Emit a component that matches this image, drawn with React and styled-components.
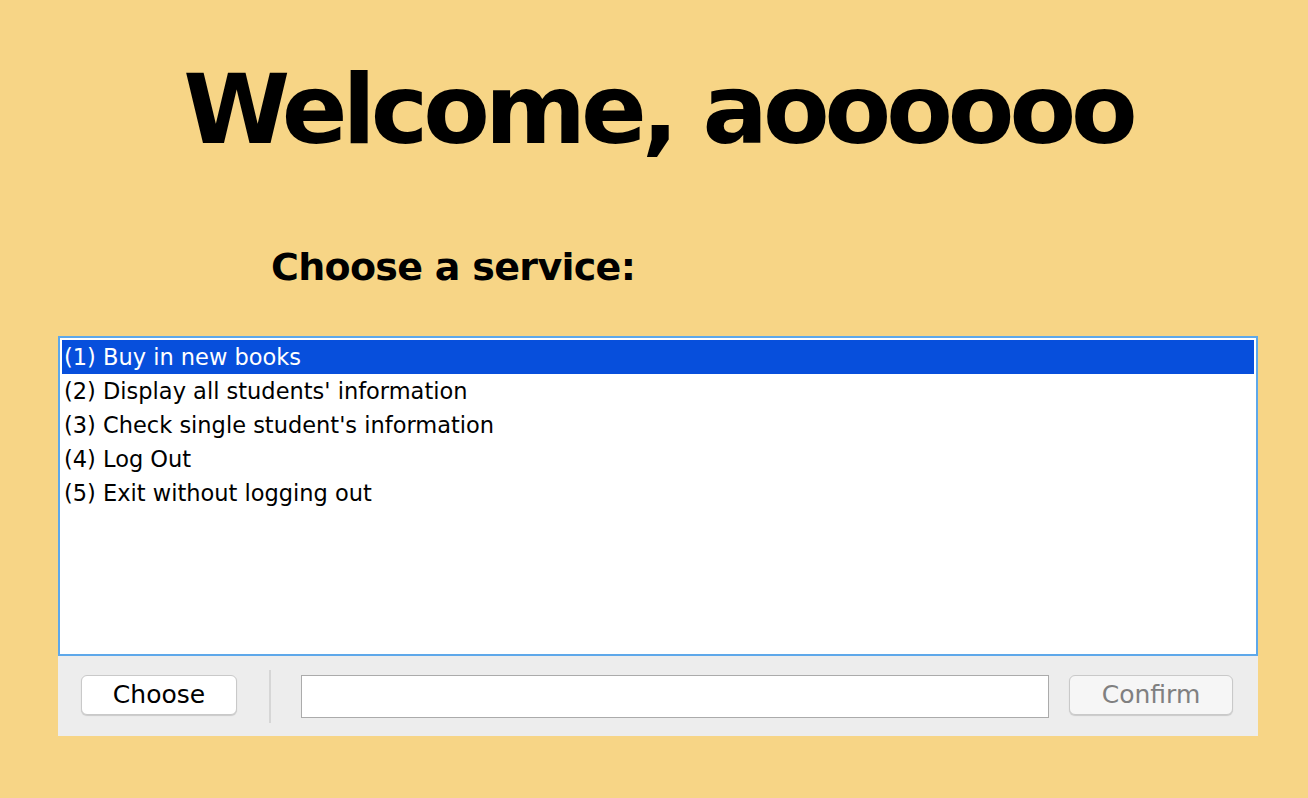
import React from 'react';
import styled, { createGlobalStyle } from 'styled-components';

const GlobalStyle = createGlobalStyle`
  html, body {
    margin: 0;
    padding: 0;
    background: #f7d586;
    font-family: "DejaVu Sans", "Liberation Sans", sans-serif;
  }
`;

const Page = styled.div`
  width: 1308px;
  height: 798px;
  box-sizing: border-box;
  padding-left: 8px;
  display: flex;
  flex-direction: column;
  align-items: center;
  overflow: hidden;
`;

const Title = styled.h1`
  margin: 50px 0 0;
  font-size: 97px;
  line-height: 120px;
  letter-spacing: -5px;
  font-weight: bold;
  color: #000;
`;

const Prompt = styled.h2`
  align-self: flex-start;
  margin: 72px 0 0;
  padding-left: 263px;
  font-size: 38px;
  line-height: 50px;
  letter-spacing: -0.7px;
  font-weight: bold;
  color: #000;
`;

const Frame = styled.div`
  width: 1200px;
  margin-top: 44px;
  display: flex;
  flex-direction: column;
`;

const ListBox = styled.ul`
  margin: 0;
  list-style: none;
  height: 320px;
  box-sizing: border-box;
  border: 2px solid #5ea8ea;
  padding: 2px;
  background: #fff;
`;

const Item = styled.li`
  height: 34px;
  line-height: 34px;
  padding-left: 2px;
  font-size: 22.5px;
  color: ${p => (p.$selected ? '#fff' : '#000')};
  background: ${p => (p.$selected ? '#074fdc' : 'transparent')};
  white-space: nowrap;
`;

const Bar = styled.div`
  height: 80px;
  background: #ededed;
  display: flex;
  align-items: center;
  padding: 0 25px 0 23px;
  box-sizing: border-box;
`;

const Button = styled.button`
  height: 40px;
  width: ${p => p.$w}px;
  border-radius: 6px;
  border: 1px solid #c9c9c9;
  background: ${p => (p.disabled ? '#f6f6f6' : '#fff')};
  color: ${p => (p.disabled ? '#808080' : '#000')};
  box-shadow: 0 1px 1px rgba(0, 0, 0, 0.15);
  font-family: inherit;
  font-size: 25px;
  padding: 0;
  margin-top: -3px;
`;

const Divider = styled.div`
  width: 2px;
  height: 53px;
  background: #d6d6d6;
  margin: 0 30px 0 32px;
`;

const Field = styled.input`
  width: 748px;
  height: 43px;
  box-sizing: border-box;
  border: 1px solid #ababab;
  background: #fff;
  margin-right: 20px;
`;

const services = [
  '(1) Buy in new books',
  "(2) Display all students' information",
  "(3) Check single student's information",
  '(4) Log Out',
  '(5) Exit without logging out',
];

export default function App() {
  return (
    <Page>
      <GlobalStyle />
      <Title>Welcome, aoooooo</Title>
      <Prompt>Choose a service:</Prompt>
      <Frame>
        <ListBox>
          {services.map((s, i) => (
            <Item key={s} $selected={i === 0}>{s}</Item>
          ))}
        </ListBox>
        <Bar>
          <Button $w={156}>Choose</Button>
          <Divider />
          <Field />
          <Button $w={164} disabled>Confirm</Button>
        </Bar>
      </Frame>
    </Page>
  );
}
